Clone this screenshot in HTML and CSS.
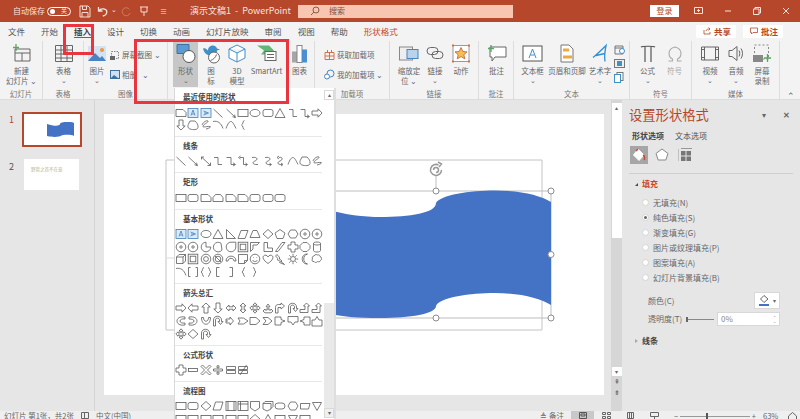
FILE: index.html
```html
<!DOCTYPE html>
<html lang="zh-CN">
<head>
<meta charset="utf-8">
<title>演示文稿1 - PowerPoint</title>
<link rel="stylesheet" href="styles.css">
</head>
<body>
<svg class="defs" width="0" height="0">
  <symbol id="r" viewBox="0 0 12 12"><rect x="1" y="2.5" width="10" height="7"/></symbol>
  <symbol id="rr" viewBox="0 0 12 12"><rect x="1" y="2.5" width="10" height="7" rx="2"/></symbol>
  <symbol id="sn" viewBox="0 0 12 12"><path d="M1 2.5h7l3 3v4H1z"/></symbol>
  <symbol id="sm" viewBox="0 0 12 12"><path d="M3.5 2.5h5l2.5 3v4H1v-4z"/></symbol>
  <symbol id="o" viewBox="0 0 12 12"><ellipse cx="6" cy="6" rx="5" ry="3.6"/></symbol>
  <symbol id="t" viewBox="0 0 12 12"><path d="M6 1.5l5 9H1z"/></symbol>
  <symbol id="rt" viewBox="0 0 12 12"><path d="M1.5 1.5l9 9h-9z"/></symbol>
  <symbol id="p" viewBox="0 0 12 12"><path d="M4 2.5h7l-3 8H1z"/></symbol>
  <symbol id="tz" viewBox="0 0 12 12"><path d="M4 2.5h4l3 7H1z"/></symbol>
  <symbol id="d" viewBox="0 0 12 12"><path d="M6 1.5l5 4.5-5 4.5L1 6z"/></symbol>
  <symbol id="pe" viewBox="0 0 12 12"><path d="M6 1.5l5 3.6-2 5.4H3l-2-5.4z"/></symbol>
  <symbol id="h" viewBox="0 0 12 12"><path d="M3.5 2h5L11 6l-2.500 4h-5L1 6z"/></symbol>
  <symbol id="oc" viewBox="0 0 12 12"><path d="M4 1.500h4l3 3v3l-3 3H4l-3-3v-3z"/></symbol>
  <symbol id="c" viewBox="0 0 12 12"><circle cx="6" cy="6" r="4.800"/><circle cx="6" cy="6" r="1.200"/></symbol>
  <symbol id="pi" viewBox="0 0 12 12"><path d="M6 1.200A4.800 4.800 0 1 0 10.800 6H6z"/></symbol>
  <symbol id="ch" viewBox="0 0 12 12"><path d="M9 2.200A4.800 4.800 0 1 0 10 9z"/></symbol>
  <symbol id="te" viewBox="0 0 12 12"><path d="M6 1.200h4.800V6A4.800 4.800 0 1 1 6 1.200z"/></symbol>
  <symbol id="fr" viewBox="0 0 12 12"><rect x="1.200" y="1.200" width="9.600" height="9.600"/><rect x="3.200" y="3.200" width="5.600" height="5.600"/></symbol>
  <symbol id="ha" viewBox="0 0 12 12"><path d="M1.500 10.500v-9h9l-2.500 2.500H4v4z"/></symbol>
  <symbol id="el" viewBox="0 0 12 12"><path d="M2 1.500h3.500v5.500h5v3.500H2z"/></symbol>
  <symbol id="di" viewBox="0 0 12 12"><path d="M1.500 10.500L8 1.500h3L4 10.500z"/></symbol>
  <symbol id="pl" viewBox="0 0 12 12"><path d="M4 1h4v3h3v4H8v3H4V8H1V4h3z"/></symbol>
  <symbol id="ca" viewBox="0 0 12 12"><path d="M2.500 2.500v7c0 2 7 2 7 0v-7c0-2-7-2-7 0c0 2 7 2 7 0"/></symbol>
  <symbol id="cu" viewBox="0 0 12 12"><path d="M1.500 4L4 1.500h6.500V8L8 10.500H1.500zM1.500 4H8v6.500M8 4l2.500-2.500"/></symbol>
  <symbol id="dn" viewBox="0 0 12 12"><circle cx="6" cy="6" r="4.800"/><circle cx="6" cy="6" r="2.400"/></symbol>
  <symbol id="no" viewBox="0 0 12 12"><circle cx="6" cy="6" r="4.800"/><circle cx="6" cy="6" r="2.800"/><path d="M3 3l6 6"/></symbol>
  <symbol id="ab" viewBox="0 0 12 12"><path d="M1 8C1 1.500 11 1.500 11 8H9C9 4.500 3 4.500 3 8z"/></symbol>
  <symbol id="fo" viewBox="0 0 12 12"><path d="M1.500 1.500h9v6l-3 3h-6zM7.500 10.500v-3h3"/></symbol>
  <symbol id="sl" viewBox="0 0 12 12"><circle cx="6" cy="6" r="4.800"/><path d="M3.500 7c1 2 4 2 5 0M4 4.500h.6M7.500 4.500h.6"/></symbol>
  <symbol id="he" viewBox="0 0 12 12"><path d="M6 10.500C1 7 .5 4.500 1.500 3c1.500-1.500 3.500-1 4.500 1 1-2 3-2.500 4.500-1 1 1.500.5 4-4.500 7.500z"/></symbol>
  <symbol id="bo" viewBox="0 0 12 12"><path d="M3 1.500l3 3.500-1 .5 3 2.500-1 .5 3.500 3-5-2 1-1-3.500-2 1-.8L1.500 3z"/></symbol>
  <symbol id="su" viewBox="0 0 12 12"><circle cx="6" cy="6" r="2.500"/><path d="M6 .8v2M6 9.200v2M.8 6h2M9.200 6h2M2.300 2.300l1.400 1.400M8.300 8.300l1.400 1.400M2.300 9.700l1.400-1.400M8.300 3.700l1.400-1.400"/></symbol>
  <symbol id="mo" viewBox="0 0 12 12"><path d="M8.500 1C3.500 2 3.500 10 8.500 11 2 11.500 1 1 8.500 1z"/></symbol>
  <symbol id="cl" viewBox="0 0 12 12"><path d="M3 3c1-2 3-1.500 3.500-1 1-.5 2.500 0 2.500 1.500 2 .5 2 3 .5 4-.5 1.500-2 1.500-3 1-1 1.500-3 1-3.500 0C1 9 .5 7 1.500 6 .8 4.500 1.500 3 3 3z"/></symbol>
  <symbol id="l" viewBox="0 0 12 12"><path d="M1.500 2l9 8.500"/></symbol>
  <symbol id="la" viewBox="0 0 12 12"><path d="M1.500 2l8.500 8M7.500 9.700l3 1-1-3"/></symbol>
  <symbol id="ld" viewBox="0 0 12 12"><path d="M1.500 2l9 8.500M1.500 4.500V2H4M7.500 10.500h3V7.500"/></symbol>
  <symbol id="e" viewBox="0 0 12 12"><path d="M2 2.500h4v7h4"/></symbol>
  <symbol id="ea" viewBox="0 0 12 12"><path d="M1.500 2.500h4.500v7h4M8 7.800l2.500 1.700L8 11"/></symbol>
  <symbol id="ed" viewBox="0 0 12 12"><path d="M3 2.500h3.500v7H10M3.500 1L1.500 2.500 3.500 4M8.500 8l2 1.500-2 1.500"/></symbol>
  <symbol id="z" viewBox="0 0 12 12"><path d="M3 2.500C9 1.500 9 5 6 6S3 10 9 9.500"/></symbol>
  <symbol id="za" viewBox="0 0 12 12"><path d="M3 2.500C9 1.500 9 5 6 6S3 10 9 9.500M7.500 8l2 1.500-2 1.500"/></symbol>
  <symbol id="zd" viewBox="0 0 12 12"><path d="M5 2.500C9 1.500 9 5 6 6S3 10 8 9.500M5 1L3 2.500 5 4M7 8l2 1.500-2 1.500"/></symbol>
  <symbol id="n" viewBox="0 0 12 12"><path d="M1 9.500C3 4 4.500 2.500 6 2.500s3 3 5 7"/></symbol>
  <symbol id="ar" viewBox="0 0 12 12"><path d="M1 2.500c5-1 8 1.500 10 7"/></symbol>
  <symbol id="fc" viewBox="0 0 12 12"><path d="M3 2h5c2 2 3.500 4 3 6.500S6 11 3 10 1 6 1.500 5z"/></symbol>
  <symbol id="sc" viewBox="0 0 12 12"><path d="M2 6c1-3 5-5 6-4S4 5 3 7s5 0 7 .5-3 2.500-4 2.500"/></symbol>
  <symbol id="br" viewBox="0 0 12 12"><path d="M7.500 1.500c-2 0-1 4-3 4.500 2 .5 1 4.500 3 4.500"/></symbol>
  <symbol id="bc" viewBox="0 0 12 12"><path d="M8 1.500c-2 0-1 4-3 4.500 2 .5 1 4.500 3 4.500"/></symbol>
  <symbol id="bd" viewBox="0 0 12 12"><path d="M4 1.500c2 0 1 4 3 4.500-2 .5-1 4.500-3 4.500"/></symbol>
  <symbol id="bl" viewBox="0 0 12 12"><path d="M7.500 1.500h-3v9h3"/></symbol>
  <symbol id="bk" viewBox="0 0 12 12"><path d="M4.500 1.500h3v9h-3"/></symbol>
  <symbol id="bp" viewBox="0 0 12 12"><path d="M3.500 1.500H1.500v9h2M8.500 1.500h2v9h-2"/></symbol>
  <symbol id="bb" viewBox="0 0 12 12"><path d="M4 1.500c-2 0-1 4-3 4.500 2 .5 1 4.500 3 4.500M8 1.500c2 0 1 4 3 4.500-2 .5-1 4.500-3 4.500"/></symbol>
  <symbol id="ra" viewBox="0 0 12 12"><path d="M1 4h6V1.800L11 6 7 10.200V8H1z"/></symbol>
  <symbol id="lf" viewBox="0 0 12 12"><path d="M11 4H5V1.800L1 6l4 4.200V8h6z"/></symbol>
  <symbol id="ua" viewBox="0 0 12 12"><path d="M4 11V5H1.800L6 1l4.200 4H8v6z"/></symbol>
  <symbol id="da" viewBox="0 0 12 12"><path d="M4 1v6H1.800L6 11l4.200-4H8V1z"/></symbol>
  <symbol id="lr" viewBox="0 0 12 12"><path d="M1 6l3-3v1.800h4V3l3 3-3 3V7.200H4V9z"/></symbol>
  <symbol id="ud" viewBox="0 0 12 12"><path d="M6 1L3 4h1.800v4H3l3 3 3-3H7.200V4H9z"/></symbol>
  <symbol id="qa" viewBox="0 0 12 12"><path d="M6 .8L4 3h1.200v2H3V3.800L.8 6 3 8.200V7h2.200v2H4l2 2.200L8 9H6.800V7H9v1.200L11.200 6 9 3.800V5H6.800V3H8z"/></symbol>
  <symbol id="ta" viewBox="0 0 12 12"><path d="M6 2L4.200 4.500h1V8H3V7L1 9l2 1.800h6L11 9 9 7v1H6.800V4.500h1z"/></symbol>
  <symbol id="ba" viewBox="0 0 12 12"><path d="M1.500 11V5.500c0-2 1-3 3-3H7V1l3.500 3L7 7V5.500H4V11z"/></symbol>
  <symbol id="ut" viewBox="0 0 12 12"><path d="M1.500 11V5c0-5 8-5 8 0v1.500H11L8.500 9.500 6 6.500h1.500V5c0-2.500-4-2.500-4 0v6z"/></symbol>
  <symbol id="lu" viewBox="0 0 12 12"><path d="M1 7.500h5V4H4.500L7.500 1l3 3H9v6.500H1z"/></symbol>
  <symbol id="cv" viewBox="0 0 12 12"><path d="M10 2C4 1 2 4 2 6s2 5 8 4V8c-3 .5-5-.5-5-2s2-2.500 5-2z"/></symbol>
  <symbol id="cw" viewBox="0 0 12 12"><path d="M2 2c6-1 8 2 8 4s-2 5-8 4V8c3 .5 5-.5 5-2S5 4 2 4z"/></symbol>
  <symbol id="uu" viewBox="0 0 12 12"><path d="M1.500 2.500c0 9 9 9 9 0H8.500c0 5-5 5-5 0z"/></symbol>
  <symbol id="ss" viewBox="0 0 12 12"><path d="M1 4h4V2l3.500 4L5 10V8H1zM2 5v2"/></symbol>
  <symbol id="ch2" viewBox="0 0 12 12"><path d="M1 3h5.500L11 6l-4.500 3H1l2-3z"/></symbol>
  <symbol id="pt" viewBox="0 0 12 12"><path d="M1 2.500h6L11 6l-4 3.500H1z"/></symbol>
  <symbol id="cc" viewBox="0 0 12 12"><path d="M1 2.500h5L10 6 6 9.500H1L4 6z"/></symbol>
  <symbol id="cr" viewBox="0 0 12 12"><path d="M1 2h6v2.500L11 6 7 7.500V10H1z"/></symbol>
  <symbol id="cd" viewBox="0 0 12 12"><path d="M1 1.500h10V7H8l-2 3-2-3H1z"/></symbol>
  <symbol id="cl2" viewBox="0 0 12 12"><path d="M11 2H5v2.500L1 6l4 1.500V10h6z"/></symbol>
  <symbol id="cu2" viewBox="0 0 12 12"><path d="M1 11V5h3l2-3.500L8 5h3v6z"/></symbol>
  <symbol id="mi" viewBox="0 0 12 12"><rect x="1.500" y="4.500" width="9" height="3"/></symbol>
  <symbol id="mu" viewBox="0 0 12 12"><path d="M2.500 1L6 4.500 9.500 1 11 2.500 7.500 6 11 9.500 9.500 11 6 7.500 2.500 11 1 9.500 4.500 6 1 2.500z"/></symbol>
  <symbol id="dv" viewBox="0 0 12 12"><path d="M1.500 5h9v2h-9zM5 1.800h2v2H5zM5 8.200h2v2H5z"/></symbol>
  <symbol id="eq" viewBox="0 0 12 12"><path d="M1.500 2.500h9v3h-9zM1.500 6.500h9v3h-9z"/></symbol>
  <symbol id="ne" viewBox="0 0 12 12"><path d="M1.500 2.500h9v3h-9zM1.500 6.500h9v3h-9zM3 11L9.500 1"/></symbol>
  <symbol id="pr" viewBox="0 0 12 12"><path d="M3.500 2H11L8.500 10H1z"/></symbol>
  <symbol id="sb" viewBox="0 0 12 12"><rect x="1" y="1.500" width="10" height="9"/><path d="M3 1.500v9M9 1.500v9"/></symbol>
  <symbol id="ib" viewBox="0 0 12 12"><rect x="1" y="1.500" width="10" height="9"/><path d="M3.500 1.500v9M1 4h10"/></symbol>
  <symbol id="doc" viewBox="0 0 12 12"><path d="M1.500 1.500h9v6.500L6 11 1.500 8z"/></symbol>
  <symbol id="mdoc" viewBox="0 0 12 12"><path d="M1 3.500h8v5.500L5 11 1 9zM1 3.500L3 1.500h8v5l-2 2M5 1.500"/></symbol>
  <symbol id="tm" viewBox="0 0 12 12"><rect x="1" y="3" width="10" height="6" rx="3"/></symbol>
  <symbol id="dd" viewBox="0 0 12 12"><path d="M1.500 9V3.500H11l-1.500 5.500z"/></symbol>
  <symbol id="md" viewBox="0 0 12 12"><path d="M1.500 2.500h9L6 10.500z"/></symbol>
  <symbol id="tb" viewBox="0 0 12 12"><rect class="bl" x="1" y="1.500" width="10" height="9"/><path class="bl" d="M4 8.500L6 3l2 5.500M4.800 7h2.400"/></symbol>
  <symbol id="tv" viewBox="0 0 12 12"><rect class="bl" x="1" y="1.500" width="10" height="9"/><path class="bl" d="M3.500 4l5 2-5 2M4 6h3"/></symbol>
</svg>

<header class="title">
  <span class="autosave">自动保存</span>
  <span class="toggle"><i class="dot"></i><b>关</b></span>
  <svg class="qa-save" width="12" height="13" viewBox="0 0 12 13"><path d="M1 1h8l2 2v9H1zM3.500 1v3.500h4V1M3 12V7.500h6V12" fill="none" stroke="#f6dcd2"/></svg>
  <svg class="qa-undo" width="11" height="11" viewBox="0 0 11 11"><path d="M1.500 1v4h4M1.500 5C4 1.500 10 2.500 9.800 6c-.1 2-1.800 3.500-4 4" fill="none" stroke="#f6e3dc" stroke-width="1.300"/></svg>
  <span class="caret-w">⌄</span>
  <svg class="qa-redo" width="10" height="11" viewBox="0 0 10 11"><path d="M8.500 3.500A4 4 0 1 0 9 7" fill="none" stroke="#cb7d66"/></svg>
  <svg class="qa-pin" width="10" height="11" viewBox="0 0 10 11"><path d="M1 1h8M2 1v5h6V1M5 6v4" fill="none" stroke="#f6dcd2"/></svg>
  <span class="qa-more">≡</span>
  <span class="doc">演示文稿1&nbsp; -&nbsp; PowerPoint</span>
  <div class="search">
    <svg width="10" height="10" viewBox="0 0 10 10"><circle cx="6" cy="4" r="3" fill="none" stroke="#8a5a48"/><path d="M3.800 6.200L1 9" stroke="#8a5a48"/></svg>
    <span>搜索</span>
  </div>
  <span class="login">登录</span>
  <div class="win">
    <svg width="9" height="8" viewBox="0 0 9 8"><path d="M.5.500h8v6h-8zM4.500 2v3M3 3.500h3" fill="none" stroke="#f6e3dc"/></svg>
    <svg width="8" height="8" viewBox="0 0 8 8"><path d="M1 4h6" stroke="#f6e3dc"/></svg>
    <svg width="8" height="8" viewBox="0 0 8 8"><path d="M.5 2h5.500v5.500H.5zM2 2V.5h5.500V6H6" fill="none" stroke="#f6e3dc"/></svg>
    <svg width="8" height="8" viewBox="0 0 8 8"><path d="M1 1l6 6M7 1L1 7" stroke="#f6e3dc"/></svg>
  </div>
</header>

<nav class="tabs">
  <span>文件</span><span>开始</span><span class="on">插入</span><span>设计</span><span>切换</span><span>动画</span><span>幻灯片放映</span><span>审阅</span><span>视图</span><span>帮助</span><span class="ctx">形状格式</span>
  <div class="share">
    <span class="sbtn"><svg width="8" height="8" viewBox="0 0 8 8"><path d="M1 3v4h6V5M3 4c.5-2 2-2 4-2M5.500.5L7 2 5.500 3.500" fill="none" stroke="#b7472a" stroke-width=".8"/></svg>共享</span>
    <span class="sbtn"><svg width="8" height="8" viewBox="0 0 8 8"><path d="M.5 1h7v4.500H3L1.500 7V5.500h-1z" fill="none" stroke="#b7472a" stroke-width=".8"/></svg>批注</span>
  </div>
</nav>

<section class="ribbon">
  <div class="grp w43">
    <div class="items">
      <div class="it w43"><svg width="20" height="19" viewBox="0 0 20 19"><path d="M3 5h15v12H3zM3 9h15M10 9v8" fill="none" stroke="#666"/><path d="M4 0v7M1 3.500h6" stroke="#5aa469" stroke-width="1.300"/></svg><span>新建</span><span>幻灯片 ⌄</span></div>
    </div><em>幻灯片</em>
  </div>
  <div class="grp w41">
    <div class="items">
      <div class="it w41"><svg width="20" height="19" viewBox="0 0 20 19"><path d="M1.500 1.500h17v16h-17zM1.500 6h17M1.500 10h17M1.500 14h17M7 1.500v16M13 1.500v16" fill="none" stroke="#666"/></svg><span>表格</span><span class="ch">⌄</span></div>
    </div><em>表格</em>
  </div>
  <div class="grp w84">
    <div class="items">
      <div class="it w26"><svg width="18" height="15" viewBox="0 0 18 15"><rect width="18" height="15" fill="#d3e3f3"/><path d="M0 15l7-8 5 5 2-2 4 5z" fill="#4a83c0"/><circle cx="14" cy="4" r="2" fill="#ee9a3a"/></svg><span>图片</span><span class="ch">⌄</span></div>
      <div class="stack">
        <div class="sm"><svg width="10" height="10" viewBox="0 0 10 10"><path d="M1.500 1.500h7v7h-7z" fill="none" stroke="#888" stroke-dasharray="1.500 1"/><rect y="6" width="5" height="4" fill="#666"/></svg>屏幕截图 ⌄</div>
        <div class="sm"><svg width="10" height="9" viewBox="0 0 10 9"><rect x=".5" y=".5" width="9" height="8" fill="#cfe0f0" stroke="#3f6f9f"/><path d="M1 8l3-3 4 3z" fill="#3f6f9f"/></svg>相册&nbsp;&nbsp;&nbsp;⌄</div>
      </div>
    </div><em>图像</em>
  </div>
  <div class="grp w147">
    <div class="items pad6">
      <div class="it w25 sel"><svg width="20" height="20" viewBox="0 0 20 20"><path d="M1 1h12v9H1z" fill="#5b9bd5" stroke="#41719c"/><circle cx="13" cy="13" r="6" fill="#fff" stroke="#555"/></svg><span>形状</span><span class="ch">⌄</span></div>
      <div class="it w26"><svg width="20" height="20" viewBox="0 0 20 20"><path d="M2 5c3-1 4 2 5 2 0-5 7-7 9-2l3 1-3 1c0 5-5 7-8 5C5 11 3 9 2 5z" fill="#3f8fc9"/><circle cx="13" cy="14" r="5.500" fill="#fff" stroke="#666"/><path d="M9.500 17c3-1 5-3 6-6" stroke="#666" fill="none"/></svg><span>图</span><span>标</span></div>
      <div class="it w26"><svg width="18" height="20" viewBox="0 0 18 20"><path d="M9 1.500l8 4v9l-8 4-8-4v-9zM1 5.500l8 4 8-4M9 9.500v9" fill="#fff" stroke="#3f8fc9"/></svg><span>3D</span><span>模型</span></div>
      <div class="it w33"><svg width="20" height="18" viewBox="0 0 20 18"><path d="M0 1h12l5 5-5 4H4l3-4z" fill="#5fb878"/><rect x="8" y="7" width="11" height="9" fill="#fff" stroke="#666"/><path d="M10 10h7M10 13h7" stroke="#666"/></svg><span>SmartArt</span></div>
      <div class="it w21 chart"><svg width="16" height="18" viewBox="0 0 16 18"><rect y="7" width="5" height="11" fill="#a6a6a6"/><rect x="5" y="1" width="5" height="17" fill="#fff" stroke="#888"/><rect x="10" y="5" width="5" height="13" fill="#4a90d0"/></svg><span>图表</span></div>
    </div><em>插图</em>
  </div>
  <div class="grp w75">
    <div class="items pad3">
      <div class="stack wide">
        <div class="sm big"><svg width="11" height="11" viewBox="0 0 11 11"><path d="M1 3.500h9v7H1zM5.500 3.500v7M1 7h9M3.500 3.500V1M7.500 3.500V1" fill="none" stroke="#d2714e"/></svg>获取加载项</div>
        <div class="sm big"><svg width="11" height="11" viewBox="0 0 11 11"><circle cx="6.500" cy="4.500" r="3.500" fill="none" stroke="#4a83c0"/><circle cx="3" cy="7.500" r="2.500" fill="#fff" stroke="#4a83c0"/></svg>我的加载项 ⌄</div>
      </div>
    </div><em>加载项</em>
  </div>
  <div class="grp w89">
    <div class="items padlink">
      <div class="it w26"><svg width="20" height="14" viewBox="0 0 20 14"><rect x=".5" y=".5" width="13" height="13" fill="#eee" stroke="#888"/><rect x="8" y="3" width="11" height="9" fill="#b9d3ea" stroke="#4a83c0"/></svg><span>缩放定</span><span>位 ⌄</span></div>
      <div class="it w26"><svg width="18" height="14" viewBox="0 0 18 14"><rect x="1" y="1" width="11" height="7" rx="3.500" fill="none" stroke="#666"/><rect x="6" y="5" width="11" height="7" rx="3.500" fill="none" stroke="#666"/></svg><span>链接</span><span class="ch">⌄</span></div>
      <div class="it w26"><svg width="18" height="18" viewBox="0 0 18 18"><rect x="1" y="1" width="16" height="16" fill="#fff" stroke="#999"/><path d="M9 3l1.800 4 4.200.4-3.200 2.800 1 4.200L9 12l-3.800 2.400 1-4.200L3 7.400 7.200 7z" fill="#f4c04f" stroke="#d2714e"/><path d="M0 0h2v2H0zM16 0h2v2h-2zM0 16h2v2H0zM16 16h2v2h-2z" fill="#d2714e"/></svg><span>动作</span></div>
    </div><em>链接</em>
  </div>
  <div class="grp w35">
    <div class="items">
      <div class="it w35"><svg width="20" height="17" viewBox="0 0 20 17"><path d="M3 2h16v10H8l-3 4v-4H3z" fill="#fff" stroke="#666"/><path d="M4 0v7M1 3.500h6" stroke="#5aa469" stroke-width="1.300"/></svg><span>批注</span></div>
    </div><em>批注</em>
  </div>
  <div class="grp w116">
    <div class="items pad4">
      <div class="it w29"><svg width="21" height="17" viewBox="0 0 21 17"><rect x="1" y="1" width="19" height="15" fill="#fff" stroke="#555"/><path d="M7 13l3.500-9L14 13M8.500 10h4" fill="none" stroke="#3f8fc9"/></svg><span>文本框</span><span class="ch">⌄</span></div>
      <div class="it w40"><svg width="14" height="18" viewBox="0 0 14 18"><path d="M1 .5h8l4 4v13H1z" fill="#fff" stroke="#777"/><rect x="3" y="4" width="6" height="3" fill="#efa83c"/><rect x="3" y="11" width="9" height="3" fill="#efa83c"/></svg><span>页眉和页脚</span></div>
      <div class="it w26"><svg width="16" height="18" viewBox="0 0 16 18"><path d="M1 13C6 9 11 4 14 1c-1 5-2 10-1 16M4 11l9-2" fill="none" stroke="#2f8fd6" stroke-width="1.300"/></svg><span>艺术字</span><span class="ch">⌄</span></div>
      <div class="mini">
        <svg width="11" height="11" viewBox="0 0 11 11"><path d="M1 2h8v8H1zM1 4h8" fill="none" stroke="#777"/><circle cx="8" cy="7" r="2.500" fill="#fff" stroke="#3f8fc9"/></svg>
        <svg width="11" height="9" viewBox="0 0 11 9"><rect x=".5" y=".5" width="10" height="8" fill="#eee" stroke="#777"/><rect x="3" y="2" width="5" height="5" fill="#3f8fc9"/></svg>
        <svg width="10" height="11" viewBox="0 0 10 11"><rect x="3" y=".5" width="6" height="8" fill="#fff" stroke="#777"/><rect x=".5" y="2.500" width="6" height="8" fill="#fff" stroke="#3f8fc9"/></svg>
      </div>
    </div><em>文本</em>
  </div>
  <div class="grp w62">
    <div class="items pad4">
      <div class="it w27"><svg width="16" height="17" viewBox="0 0 16 17"><path d="M1 2c1-1 13-1 14 0M5 2v15M11 2v15" fill="none" stroke="#555" stroke-width="1.200"/></svg><span>公式</span><span class="ch">⌄</span></div>
      <div class="it w27 dim"><svg width="16" height="17" viewBox="0 0 16 17"><path d="M1.500 16h4v-2C1 12 0 4 8 2c8 2 7 10 2.500 12v2h4" fill="none" stroke="#aaa" stroke-width="1.100"/></svg><span>符号</span></div>
    </div><em>符号</em>
  </div>
  <div class="grp w88">
    <div class="items padmedia">
      <div class="it w26"><svg width="18" height="14" viewBox="0 0 18 14"><path d="M.5.500h17v13H.5zM3.500.5v13M14.500.5v13M0 3h3M0 11h3M15 3h3M15 11h3" fill="none" stroke="#666"/></svg><span>视频</span><span class="ch">⌄</span></div>
      <div class="it w26"><svg width="17" height="16" viewBox="0 0 17 16"><path d="M1 5h3l5-4v14l-5-4H1zM11 5c1 2 1 4 0 6M13 3c2 3 2 7 0 10" fill="none" stroke="#666"/></svg><span>音频</span><span class="ch">⌄</span></div>
      <div class="it w26"><svg width="18" height="19" viewBox="0 0 18 19"><path d="M1.500 1h14v14h-14z" fill="none" stroke="#888" stroke-dasharray="2 2"/><rect y="11" width="10" height="7" fill="#888"/><path d="M14.500 10v8M11 14h7" stroke="#4caf50" stroke-width="1.300"/></svg><span>屏幕</span><span>录制</span></div>
    </div><em>媒体</em>
  </div>
  <span class="collapse">⌃</span>
</section>

<main class="main">
  <aside class="thumbs">
    <div class="tr"><b class="num act">1</b><div class="th th1"><svg width="27" height="15" viewBox="0 0 27 15"><path d="M0 2c9 3 13 2 13.500-1C15 0 23-1 27 1v13c-4-2-12-1-13.500 0C13 14 9 16 0 14z" fill="#4472c4"/></svg></div></div>
    <div class="tr"><b class="num">2</b><div class="th th2">野兽之首不在意</div></div>
  </aside>
  <div class="stage">
    <div class="slide">
      <svg class="art" width="500" height="281" viewBox="104 114 500 281">
        <path d="M166 160H542V330H166z" fill="none" stroke="#c4c4c4"/>
        <path d="M166 258H330" stroke="#dadada"/>
        <path d="M321 191H551V318H321z" fill="none" stroke="#bdbdbd"/>
        <path d="M321 208C345 215 365 217 380 217C410 217 436 213 436 203C440 195 470 190.500 495 190.500C520 190.500 540 195 551 202V305C540 298 520 293 495 293C470 293 440 297 436 306C436 314 410 318 380 318C360 318 340 317 321 312Z" fill="#4472c4"/>
        <path d="M436 176V191" stroke="#bdbdbd"/>
        <path d="M441.500 170a5.500 5.500 0 1 1-3-5M433.500 170a2.500 2.500 0 1 1 2.500 2.500M438 162l3.500 2-2.500 3" fill="none" stroke="#999" stroke-width="1.500"/>
        <g fill="#fff" stroke="#8c8c8c"><circle cx="436" cy="191" r="3"/><circle cx="551" cy="191" r="3"/><circle cx="551" cy="254.500" r="3"/><circle cx="436" cy="318" r="3"/><circle cx="551" cy="318" r="3"/></g>
      </svg>
    </div>
  </div>
  <div class="vscroll">
    <i class="sb up">▴</i><i class="thumb"></i><i class="track"></i><i class="sb dn">▾</i><i class="nav">⇞</i><i class="nav">⇟</i>
  </div>
  <aside class="pane">
    <div class="ph"><h2>设置形状格式</h2><span class="pd">▾</span><span class="px">✕</span></div>
    <div class="ptabs"><b>形状选项</b><span>文本选项</span></div>
    <div class="picons">
      <span class="pi sel"><svg width="14" height="14" viewBox="0 0 14 14"><path d="M6 1l6 6-5 5.500L1.500 7z" fill="#fff" stroke="#fff"/><path d="M6 1L4 3M11 7c2 1 2 4 1 5" fill="none" stroke="#c8472a" stroke-width="1.400"/></svg></span>
      <span class="pi"><svg width="14" height="14" viewBox="0 0 14 14"><path d="M7 1l6 4.500-2.200 6.500H3.200L1 5.500z" fill="#fff" stroke="#888"/></svg></span>
      <span class="pi"><svg width="14" height="14" viewBox="0 0 14 14"><path d="M0 1v12M3 .5h11" stroke="#999"/><rect x="3" y="3" width="4.500" height="4.500" fill="#777"/><rect x="8.500" y="3" width="4.500" height="4.500" fill="#777"/><rect x="3" y="8.500" width="4.500" height="4.500" fill="#777"/><rect x="8.500" y="8.500" width="4.500" height="4.500" fill="#777"/></svg></span>
    </div>
    <div class="prule"></div>
    <div class="sect"><i class="tri open"></i><b class="red">填充</b></div>
    <ul class="radios">
      <li><i></i>无填充(N)</li>
      <li><i class="chk"></i>纯色填充(S)</li>
      <li><i></i>渐变填充(G)</li>
      <li><i></i>图片或纹理填充(P)</li>
      <li><i></i>图案填充(A)</li>
      <li><i></i>幻灯片背景填充(B)</li>
    </ul>
    <div class="frow r1"><span>颜色(C)</span><span class="cbtn"><svg width="11" height="11" viewBox="0 0 11 11"><path d="M5 .5L9 4 5 7.500 1.500 4z" fill="#fff" stroke="#666"/><path d="M0 9h10v2H0z" fill="#4472c4"/></svg><small>▾</small></span></div>
    <div class="frow r2"><span class="lab">透明度(T)</span><i class="slider"></i><span class="inp">0%<small>⌃<br>⌄</small></span></div>
    <div class="sect s2"><i class="tri"></i><b>线条</b></div>
  </aside>
</main>

<footer class="status">
  <span>幻灯片 第1张，共2张</span>
  <svg width="8" height="7" viewBox="0 0 8 7"><path d="M.5.500h7v6h-7zM3.500.5v6" fill="none" stroke="#666"/></svg>
  <span>中文(中国)</span>
  <span class="grow"></span>
  <span class="notes">≜ 备注</span>
  <span class="view on"><svg width="8" height="7" viewBox="0 0 8 7"><path d="M.5.500h7v6h-7zM2 2h4v2H2z" fill="none" stroke="#555"/></svg></span>
  <span class="view"><svg width="9" height="7" viewBox="0 0 9 7"><path d="M.5.500h3v2h-3zM5.500.5h3v2h-3zM.5 4.500h3v2h-3zM5.500 4.500h3v2h-3z" fill="none" stroke="#666"/></svg></span>
  <span class="view"><svg width="9" height="7" viewBox="0 0 9 7"><path d="M1.500.5h6v6h-6zM3.500.5v6M5.500.5v6" fill="none" stroke="#666"/></svg></span>
  <span class="view"><svg width="9" height="7" viewBox="0 0 9 7"><path d="M.5.500h8v4h-8zM4.500 4.500V7" fill="none" stroke="#666"/></svg></span>
  <span class="zoomer"><i>−</i><u><s></s></u><i>+</i></span>
  <span class="pct">63%</span>
  <svg class="fit" width="9" height="8" viewBox="0 0 9 8"><path d="M.5 4L4.500.5 8.500 4v3.500h-8z" fill="none" stroke="#666"/></svg>
</footer>

<div class="gallery">
  <div class="gbar"><span class="gup">▴</span><span class="gthumb"></span><span class="gtrack"></span><span class="gdn">▾</span></div>
  <section class="gs">
    <h4>最近使用的形状</h4>
    <div class="cells">
      <svg><use href="#sn"/></svg><svg><use href="#tb"/></svg><svg><use href="#tv"/></svg><svg><use href="#l"/></svg><svg><use href="#la"/></svg><svg><use href="#r"/></svg><svg><use href="#o"/></svg><svg><use href="#rr"/></svg><svg><use href="#t"/></svg><svg><use href="#e"/></svg><svg><use href="#ea"/></svg><svg><use href="#ra"/></svg>
      <svg><use href="#da"/></svg><svg><use href="#fc"/></svg><svg><use href="#sc"/></svg><svg><use href="#ar"/></svg><svg><use href="#n"/></svg><svg><use href="#br"/></svg>
    </div>
  </section>
  <section class="gs">
    <h4>线条</h4>
    <div class="cells">
      <svg><use href="#l"/></svg><svg><use href="#la"/></svg><svg><use href="#ld"/></svg><svg><use href="#e"/></svg><svg><use href="#ea"/></svg><svg><use href="#ed"/></svg><svg><use href="#z"/></svg><svg><use href="#za"/></svg><svg><use href="#zd"/></svg><svg><use href="#n"/></svg><svg><use href="#fc"/></svg><svg><use href="#sc"/></svg>
    </div>
  </section>
  <section class="gs">
    <h4>矩形</h4>
    <div class="cells">
      <svg><use href="#r"/></svg><svg><use href="#rr"/></svg><svg><use href="#sn"/></svg><svg><use href="#sm"/></svg><svg><use href="#sn"/></svg><svg><use href="#sn"/></svg><svg><use href="#rr"/></svg><svg><use href="#rr"/></svg><svg><use href="#rr"/></svg>
    </div>
  </section>
  <section class="gs">
    <h4>基本形状</h4>
    <div class="cells">
      <svg><use href="#tb"/></svg><svg><use href="#tv"/></svg><svg><use href="#o"/></svg><svg><use href="#t"/></svg><svg><use href="#rt"/></svg><svg><use href="#p"/></svg><svg><use href="#tz"/></svg><svg><use href="#d"/></svg><svg><use href="#pe"/></svg><svg><use href="#h"/></svg><svg><use href="#c"/></svg><svg><use href="#c"/></svg>
      <svg><use href="#c"/></svg><svg><use href="#c"/></svg><svg><use href="#pi"/></svg><svg><use href="#ch"/></svg><svg><use href="#te"/></svg><svg><use href="#fr"/></svg><svg><use href="#ha"/></svg><svg><use href="#el"/></svg><svg><use href="#di"/></svg><svg><use href="#pl"/></svg><svg><use href="#oc"/></svg><svg><use href="#ca"/></svg>
      <svg><use href="#cu"/></svg><svg><use href="#fr"/></svg><svg><use href="#dn"/></svg><svg><use href="#no"/></svg><svg><use href="#ab"/></svg><svg><use href="#fo"/></svg><svg><use href="#sl"/></svg><svg><use href="#he"/></svg><svg><use href="#bo"/></svg><svg><use href="#su"/></svg><svg><use href="#mo"/></svg><svg><use href="#cl"/></svg>
      <svg><use href="#ar"/></svg><svg><use href="#bp"/></svg><svg><use href="#bb"/></svg><svg><use href="#bl"/></svg><svg><use href="#bk"/></svg><svg><use href="#bc"/></svg><svg><use href="#bd"/></svg>
    </div>
  </section>
  <section class="gs">
    <h4>箭头总汇</h4>
    <div class="cells">
      <svg><use href="#ra"/></svg><svg><use href="#lf"/></svg><svg><use href="#ua"/></svg><svg><use href="#da"/></svg><svg><use href="#lr"/></svg><svg><use href="#ud"/></svg><svg><use href="#qa"/></svg><svg><use href="#ta"/></svg><svg><use href="#ba"/></svg><svg><use href="#ut"/></svg><svg><use href="#lu"/></svg><svg><use href="#lu"/></svg>
      <svg><use href="#cv"/></svg><svg><use href="#cw"/></svg><svg><use href="#uu"/></svg><svg><use href="#ut"/></svg><svg><use href="#ss"/></svg><svg><use href="#ch2"/></svg><svg><use href="#pt"/></svg><svg><use href="#cc"/></svg><svg><use href="#cr"/></svg><svg><use href="#cd"/></svg><svg><use href="#cl2"/></svg><svg><use href="#cu2"/></svg>
      <svg><use href="#qa"/></svg><svg><use href="#d"/></svg><svg><use href="#ut"/></svg>
    </div>
  </section>
  <section class="gs">
    <h4>公式形状</h4>
    <div class="cells">
      <svg><use href="#pl"/></svg><svg><use href="#mi"/></svg><svg><use href="#mu"/></svg><svg><use href="#dv"/></svg><svg><use href="#eq"/></svg><svg><use href="#ne"/></svg>
    </div>
  </section>
  <section class="gs last">
    <h4>流程图</h4>
    <div class="cells">
      <svg><use href="#r"/></svg><svg><use href="#rr"/></svg><svg><use href="#d"/></svg><svg><use href="#pr"/></svg><svg><use href="#sb"/></svg><svg><use href="#ib"/></svg><svg><use href="#doc"/></svg><svg><use href="#mdoc"/></svg><svg><use href="#tm"/></svg><svg><use href="#h"/></svg><svg><use href="#dd"/></svg><svg><use href="#md"/></svg>
      <svg><use href="#r"/></svg><svg><use href="#r"/></svg><svg><use href="#r"/></svg><svg><use href="#r"/></svg><svg><use href="#r"/></svg><svg><use href="#r"/></svg><svg><use href="#d"/></svg><svg><use href="#t"/></svg><svg><use href="#r"/></svg><svg><use href="#md"/></svg><svg><use href="#r"/></svg>
    </div>
  </section>
</div>

<i class="mark m1"></i>
<i class="mark m2"></i>
</body>
</html>
```
FILE: styles.css
```css
* { box-sizing: border-box; }
html, body { margin: 0; height: 419px; overflow: hidden; }
body { position: relative; width: 800px; display: flex; flex-direction: column; font: 8px/1.2 "Noto Sans CJK SC", "Noto Sans", sans-serif; color: #555; background: #e6e6e6; }
.defs { position: absolute; }
svg { display: block; flex: none; }

.title { flex: none; height: 22px; background: #b7472a; color: #f6e3dc; display: flex; align-items: center; padding-left: 13px; }
.autosave { width: 33px; font-size: 8px; }
.toggle { width: 24px; height: 9px; margin-left: 1px; border: 1px solid #fff; border-radius: 5px; display: flex; align-items: center; justify-content: space-between; padding: 0 3px 0 2px; }
.toggle .dot { width: 5px; height: 5px; border-radius: 50%; background: #fff; }
.toggle b { font-weight: 400; font-size: 6px; }
.qa-save { margin-left: 8px; }
.qa-undo { margin-left: 6px; }
.caret-w { width: 8px; margin-left: 3px; font-size: 7px; margin-top: -3px; }
.qa-redo { margin-left: 2px; }
.qa-pin { margin-left: 8px; }
.qa-more { width: 8px; margin-left: 11px; font-size: 7px; }
.doc { margin-left: 22px; width: 108px; white-space: nowrap; font-size: 9px; }
.search { width: 215px; height: 13px; background: #f8c6b0; display: flex; align-items: center; gap: 9px; padding-left: 12px; color: #7b5344; }
.login { margin-left: 137px; width: 29px; height: 12px; background: #fff; color: #b7472a; text-align: center; line-height: 12px; }
.win { display: flex; gap: 21px; margin-left: 15px; align-items: center; }

.tabs { flex: none; height: 18px; background: #f3f3f3; display: flex; align-items: center; gap: 16px; padding-left: 8px; font-size: 8.500px; color: #555; }
.tabs span { position: relative; white-space: nowrap; }
.tabs .on { font-weight: 700; color: #444; }
.tabs .on::after { content: ""; position: absolute; left: 0; right: 0; bottom: -2px; height: 1px; background: #b7472a; }
.tabs .ctx { color: #c8472a; }
.share { margin-left: auto; margin-right: 17px; display: flex; gap: 7px; }
.tabs .sbtn { background: #fff; color: #b7472a; font-weight: 700; height: 13px; padding: 0 5px 0 7px; display: flex; align-items: center; gap: 3px; font-size: 8.500px; }

.ribbon { flex: none; height: 60px; background: #f3f3f3; display: flex; border-bottom: 1px solid #dcdcdc; position: relative; }
.grp { flex: none; display: flex; flex-direction: column; height: 58px; border-right: 1px solid #dddddd; margin-top: 1px; }
.w43 { width: 43px; } .w41 { width: 41px; } .w84 { width: 84px; } .w147 { width: 147px; } .w75 { width: 75px; } .w89 { width: 89px; } .w35 { width: 35px; } .w116 { width: 116px; } .w62 { width: 62px; } .w88 { width: 88px; }
.grp em { font-style: normal; text-align: center; color: #777; font-size: 7.500px; line-height: 10px; padding-top: 2px; }
.items { flex: 1; display: flex; min-height: 0; }
.pad6 { padding-left: 5px; } .pad3 { padding-left: 3px; } .pad4 { padding-left: 4px; } .padlink { padding-left: 6px; } .padmedia { padding-left: 5px; }
.it { flex: none; display: flex; flex-direction: column; align-items: center; height: 46px; padding-top: 2px; color: #666; white-space: nowrap; line-height: 10px; font-size: 7.500px; }
.it svg { margin-bottom: 2px; height: 21px; }
.it.sel { background: #c6c6c6; }
.it.dim { color: #aaa; }
.it .ch { font-size: 7px; line-height: 8px; }
.chart { margin-left: 6px; }
.w21 { width: 21px; } .w25 { width: 25px; } .w26 { width: 26px; } .w27 { width: 27px; } .w29 { width: 29px; } .w33 { width: 33px; } .w40 { width: 40px; }
.stack { display: flex; flex-direction: column; gap: 9px; padding-top: 8px; }
.sm { display: flex; align-items: center; gap: 2px; color: #666; white-space: nowrap; height: 11px; font-size: 7.500px; }
.wide { padding-left: 6px; padding-top: 8px; gap: 9px; }
.big { font-size: 7.500px; }
.mini { display: flex; flex-direction: column; gap: 4px; padding-top: 3px; padding-left: 1px; }
.collapse { position: absolute; right: 5px; bottom: -3px; font-size: 9px; color: #666; }

.main { flex: 1; min-height: 0; display: flex; background: #e6e6e6; }
.thumbs { flex: none; width: 95px; border-right: 1px solid #d4d4d4; padding-top: 12px; }
.tr { display: flex; height: 47px; padding-left: 9px; }
.num { width: 13px; font-weight: 400; font-size: 9px; color: #555; line-height: 10px; padding-top: 3px; }
.num.act { color: #b7472a; }
.th { background: #fff; }
.th1 { width: 60px; height: 35px; border: 2px solid #b7472a; display: flex; align-items: center; justify-content: flex-end; padding-right: 6px; }
.th2 { width: 55px; height: 31px; margin-left: 2px; font-size: 4.500px; color: #b5b58c; padding: 8px 0 0 7px; white-space: nowrap; }
.stage { flex: none; width: 516px; padding: 14px 0 0 9px; }
.slide { width: 500px; height: 281px; background: #fff; position: relative; }
.art { position: absolute; left: 0; top: 0; overflow: visible; }
.vscroll { flex: none; width: 11px; display: flex; flex-direction: column; align-items: center; background: #d6d6d6; padding-top: 3px; }
.vscroll i { font-style: normal; width: 10px; }
.sb { height: 9px; line-height: 9px; background: #fff; text-align: center; font-size: 6px; color: #666; }
.thumb { height: 126px; background: #fff; }
.track { height: 129px; }
.nav { height: 11px; line-height: 11px; text-align: center; font-size: 7px; color: #666; }

.pane { flex: none; width: 178px; padding: 5px 7px 0 7px; background: #e6e6e6; }
.ph { display: flex; align-items: center; height: 20px; }
.ph h2 { margin: 0; font-size: 13.300px; font-weight: 400; color: #b7472a; flex: 1; white-space: nowrap; }
.pd { font-size: 8px; color: #666; margin-right: 17px; }
.px { font-size: 8px; color: #666; margin-right: 3px; font-weight: 700; }
.ptabs { display: flex; gap: 11px; padding: 6px 0 0 3px; height: 22px; }
.ptabs b { color: #444; }
.picons { display: flex; height: 20px; padding-left: 1px; gap: 5px; margin-top: -1px; }
.pi { width: 18px; height: 18px; display: flex; align-items: center; justify-content: center; }
.pi.sel { background: #a6a6a6; }
.prule { height: 1px; background: #cfcfcf; margin-top: 7px; }
.sect { display: flex; align-items: center; height: 12px; margin-top: 4px; padding-left: 6px; }
.sect b { color: #444; font-size: 8px; }
.sect .red { color: #c8472a; }
.tri { width: 0; height: 0; margin-right: 4px; border-left: 3px solid #aaa; border-top: 2px solid transparent; border-bottom: 2px solid transparent; }
.tri.open { border: 0; border-bottom: 3px solid #444; border-left: 3px solid transparent; }
.radios { list-style: none; margin: 5px 0 0; padding: 0 0 0 13px; color: #666; }
.radios li { height: 15px; display: flex; align-items: center; gap: 4px; white-space: nowrap; }
.radios i { width: 7px; height: 7px; border-radius: 50%; background: #fff; border: 1px solid #d5d5d5; position: relative; }
.radios .chk::after { content: ""; position: absolute; inset: 1px; border-radius: 50%; background: #666; }
.frow { display: flex; align-items: center; padding-left: 19px; color: #666; white-space: nowrap; }
.r1 { height: 17px; margin-top: 7px; justify-content: space-between; padding-right: 13px; }
.cbtn { width: 26px; height: 17px; background: #fff; border: 1px solid #d8d8d8; display: flex; align-items: center; justify-content: center; gap: 3px; }
.cbtn small { font-size: 6px; }
.r2 { height: 14px; margin-top: 3px; padding-right: 13px; }
.lab { width: 38px; }
.slider { width: 28px; height: 5px; border-left: 2px solid #666; background: linear-gradient(#888, #888) center / 100% 1px no-repeat; }
.inp { width: 63px; height: 14px; margin-left: 3px; background: #fff; border: 1px solid #d8d8d8; padding-left: 3px; display: flex; align-items: center; justify-content: space-between; color: #888; }
.inp small { font-size: 4px; line-height: 4px; padding-right: 3px; }
.s2 { margin-top: 9px; }

.status { flex: none; height: 8px; background: #efefef; display: flex; align-items: flex-start; padding-left: 4px; gap: 7px; color: #666; font-size: 7.500px; line-height: 10px; }
.status svg { margin-top: 1px; }
.status .grow { flex: 1; }
.notes { margin-right: 5px; white-space: nowrap; }
.view { width: 23px; height: 8px; display: flex; align-items: center; justify-content: center; margin-left: -5px; margin-right: -1px; }
.view.on { background: #c8c8c8; }
.zoomer { width: 82px; display: flex; align-items: center; gap: 2px; margin-left: 2px; }
.zoomer i { font-style: normal; }
.zoomer u { flex: 1; height: 1px; background: #999; position: relative; text-decoration: none; }
.zoomer s { position: absolute; left: 26px; top: -3px; width: 2px; height: 7px; background: #555; }
.pct { width: 18px; }
.fit { margin-right: 3px; }

.gallery { position: absolute; left: 174px; top: 88px; width: 162px; height: 331px; background: #fff; overflow: hidden; padding-right: 12px; border-left: 1px solid #d9d9d9; border-right: 2px solid #dedede; }
.gbar { position: absolute; right: 0; top: 2px; bottom: 0; width: 10px; display: flex; flex-direction: column; background: #fff; }
.gup, .gdn { flex: none; height: 10px; line-height: 8px; text-align: center; font-size: 6px; color: #666; border: 1px solid #d9d9d9; background: #fff; }
.gdn { background: #f0f0f0; margin-bottom: 1px; }
.gthumb { flex: none; height: 203px; background: #fff; }
.gtrack { flex: 1; background: #e9e9e9; }
.gs { padding: 0 0 4.300px 0; border-bottom: 1px solid #e8e8e8; }
.gs.last { border: 0; }
.gs h4 { margin: 0; height: 18.500px; line-height: 18.500px; padding-left: 8px; font-size: 7.500px; font-weight: 700; color: #444; }
.cells { display: grid; grid-template-columns: repeat(12, 12.400px); grid-auto-rows: 12.600px; }
.cells svg { width: 12px; height: 12px; fill: none; stroke: #5a5a5a; stroke-width: .8; }
.bl { stroke: #3f7fbf; fill: #dbeaf7; }

.mark { position: absolute; border: 3px solid #e8353e; }
.m1 { left: 63px; top: 24px; width: 31px; height: 31px; }
.m2 { left: 134px; top: 39px; width: 155px; height: 65px; }
```
